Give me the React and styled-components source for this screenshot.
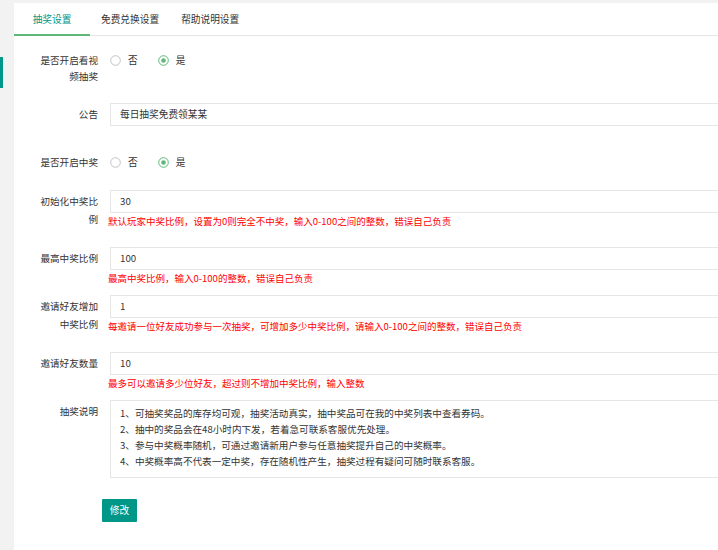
import React from "react";
import styled, { createGlobalStyle } from "styled-components";

const GlobalStyle = createGlobalStyle`
  html, body {
    margin: 0;
    padding: 0;
    background: #f2f2f2;
    overflow: hidden;
    font-family: "Noto Sans CJK SC", "Noto Sans", sans-serif;
  }
`;

const Page = styled.div`
  display: flex;
  width: 718px;
  height: 550px;
`;

const Side = styled.aside`
  width: 14px;
  flex: none;
  padding-top: 57px;
  box-sizing: border-box;
`;

const Marker = styled.div`
  width: 2.5px;
  height: 31px;
  background: #009688;
`;

const Card = styled.main`
  flex: 1;
  min-width: 0;
  margin-top: 3px;
  background: #fff;
  overflow: hidden;
`;

const Tabs = styled.ul`
  display: flex;
  margin: 0;
  padding: 0;
  list-style: none;
  height: 32px;
  border-bottom: 1px solid #e6e6e6;
`;

const Tab = styled.li`
  position: relative;
  min-width: 54px;
  padding: 0 11px;
  text-align: center;
  line-height: 32px;
  font-size: 9.7px;
  color: ${({ $active }) => ($active ? "#009688" : "#333")};
  white-space: nowrap;
  &::after {
    content: "";
    display: ${({ $active }) => ($active ? "block" : "none")};
    position: absolute;
    left: 0;
    right: 0;
    bottom: -1px;
    height: 2px;
    background: #5fb878;
  }
`;

const Form = styled.form`
  padding: 12.5px 0 0 20px;
`;

const FormItem = styled.div`
  display: flex;
  align-items: flex-start;
  margin-bottom: 9px;
`;

const Label = styled.label`
  width: 64px;
  flex: none;
  box-sizing: border-box;
  padding: ${({ $lh }) => 11.5 - $lh / 2}px 0 9.5px;
  line-height: ${({ $lh }) => $lh}px;
  font-size: 9.6px;
  color: #333;
  text-align: right;
`;

const Control = styled.div`
  margin-left: 12px;
  width: 640px;
  flex: none;
`;

const RadioGroup = styled.div`
  display: flex;
  align-items: center;
  height: 23px;
`;

const Radio = styled.span`
  display: flex;
  align-items: center;
  margin-right: 20px;
  font-size: 9.7px;
  color: #333;
  svg {
    margin-right: 7px;
  }
`;

const TextInput = styled.input`
  display: block;
  width: 100%;
  height: 23px;
  box-sizing: border-box;
  border: 1px solid #e6e6e6;
  padding: 0 9px;
  font-family: inherit;
  font-size: 9.7px;
  color: #333;
  outline: none;
`;

const Help = styled.div`
  height: 16px;
  line-height: 16px;
  font-size: 9.5px;
  color: #ff0000;
  margin-left: -2px;
  white-space: nowrap;
`;

const TextArea = styled.textarea`
  display: block;
  width: 100%;
  height: 78px;
  box-sizing: border-box;
  border: 1px solid #e6e6e6;
  padding: 4px 9px;
  font-family: inherit;
  font-size: 9.6px;
  line-height: 16px;
  color: #333;
  resize: none;
  outline: none;
`;

const Button = styled.button`
  display: block;
  margin: 21px 0 0 68px;
  width: 35px;
  height: 23px;
  padding: 0;
  border: none;
  border-radius: 1px;
  background: #009688;
  color: #fff;
  font-family: inherit;
  font-size: 9.7px;
`;

const RadioIcon = ({ checked }) => (
  <svg width="11" height="11" viewBox="0 0 11 11">
    <circle
      cx="5.5"
      cy="5.5"
      r="4.8"
      fill="none"
      stroke={checked ? "#5fb878" : "#c2c2c2"}
      strokeWidth="1"
    />
    {checked && <circle cx="5.5" cy="5.5" r="2.3" fill="#5fb878" />}
  </svg>
);

const YesNo = ({ value }) => (
  <RadioGroup>
    <Radio>
      <RadioIcon checked={!value} />否
    </Radio>
    <Radio>
      <RadioIcon checked={value} />是
    </Radio>
  </RadioGroup>
);

const rules = `1、可抽奖奖品的库存均可观，抽奖活动真实，抽中奖品可在我的中奖列表中查看券码。
2、抽中的奖品会在48小时内下发，若着急可联系客服优先处理。
3、参与中奖概率随机，可通过邀请新用户参与任意抽奖提升自己的中奖概率。
4、中奖概率高不代表一定中奖，存在随机性产生，抽奖过程有疑问可随时联系客服。`;

const numberFields = [
  {
    label: "初始化中奖比例",
    value: "30",
    help: "默认玩家中奖比例，设置为0则完全不中奖，输入0-100之间的整数，错误自己负责",
  },
  {
    label: "最高中奖比例",
    value: "100",
    help: "最高中奖比例，输入0-100的整数，错误自己负责",
  },
  {
    label: "邀请好友增加中奖比例",
    value: "1",
    help: "每邀请一位好友成功参与一次抽奖，可增加多少中奖比例，请输入0-100之间的整数，错误自己负责",
  },
  {
    label: "邀请好友数量",
    value: "10",
    help: "最多可以邀请多少位好友，超过则不增加中奖比例，输入整数",
  },
];

export default function App() {
  return (
    <>
      <GlobalStyle />
      <Page>
        <Side>
          <Marker />
        </Side>
        <Card>
          <Tabs>
            <Tab $active>抽奖设置</Tab>
            <Tab>免费兑换设置</Tab>
            <Tab>帮助说明设置</Tab>
          </Tabs>
          <Form onSubmit={(e) => e.preventDefault()}>
            <FormItem>
              <Label $lh={16}>是否开启看视频抽奖</Label>
              <Control>
                <YesNo value={true} />
              </Control>
            </FormItem>
            <FormItem>
              <Label $lh={18}>公告</Label>
              <Control>
                <TextInput defaultValue="每日抽奖免费领某某" />
                <Help />
              </Control>
            </FormItem>
            <FormItem>
              <Label $lh={18}>是否开启中奖</Label>
              <Control>
                <YesNo value={true} />
              </Control>
            </FormItem>
            {numberFields.map((f) => (
              <FormItem key={f.label}>
                <Label $lh={18}>{f.label}</Label>
                <Control>
                  <TextInput defaultValue={f.value} />
                  <Help>{f.help}</Help>
                </Control>
              </FormItem>
            ))}
            <FormItem>
              <Label $lh={18}>抽奖说明</Label>
              <Control>
                <TextArea defaultValue={rules} />
              </Control>
            </FormItem>
            <Button type="submit">修改</Button>
          </Form>
        </Card>
      </Page>
    </>
  );
}
